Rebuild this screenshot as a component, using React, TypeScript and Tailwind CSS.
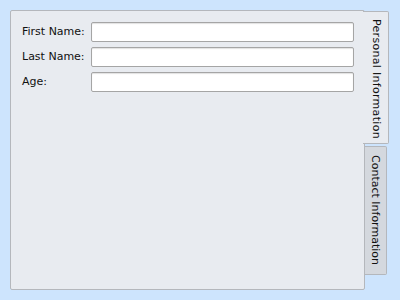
import React from "react";

export default function App() {
  const rows = ["First Name:", "Last Name:", "Age:"];
  return (
    <div className="w-[400px] h-[300px] bg-[#cde4fd] flex pt-[10px] pl-[10px] text-[11px] text-[#111111]" style={{ fontFamily: '"DejaVu Sans", Verdana, sans-serif' }}>
      <div className="w-[355px] h-[280px] bg-[#e8ebf0] border border-[#b4b7bc] rounded-[2px] pt-[11px] pl-[11px] pr-[10px] flex flex-col gap-[5px] relative z-0">
        {rows.map((r) => (
          <div key={r} className="flex items-center h-[20px]">
            <div className="w-[69px]">{r}</div>
            <div className="flex-1 h-[20px] bg-white border border-[#a5a5a5] rounded-[2px] shadow-[inset_0_1px_1px_rgba(0,0,0,0.12)]" />
          </div>
        ))}
      </div>
      <div className="flex flex-col">
        <div className="relative z-10 -ml-[2px] mt-[1px] w-[26px] h-[133px] bg-[#e8ebf0] border border-[#b4b7bc] border-l-0 rounded-tr-[2px] rounded-br-[2px] flex justify-center pt-[7px]">
          <span className="[writing-mode:vertical-rl] leading-[14px] tracking-[0.3px]">Personal Information</span>
        </div>
        <div className="-ml-[1px] mt-[2px] w-[23px] h-[129px] bg-[#d4d8de] border border-[#b4b7bc] border-l-0 rounded-tr-[2px] rounded-br-[2px] flex justify-center pt-[8px]">
          <span className="[writing-mode:vertical-rl] leading-[14px]">Contact Information</span>
        </div>
      </div>
    </div>
  );
}
